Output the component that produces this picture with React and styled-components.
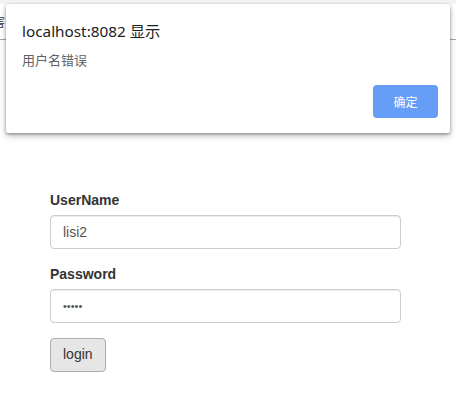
import React from "react";
import styled, { createGlobalStyle } from "styled-components";

const Global = createGlobalStyle`
  html, body { margin: 0; padding: 0; background: #fff; }
  body { font-family: "Liberation Sans", Arial, sans-serif; font-size: 14px; line-height: 1.42857; color: #333; }
  * { box-sizing: border-box; }
`;

const Page = styled.div`
  position: relative;
  width: 456px;
  height: 395px;
  overflow: hidden;
`;

const TopStrip = styled.div`
  height: 4px;
  background: #f1f3f4;
`;

const Header = styled.div`
  height: 36px;
  border-bottom: 1px solid #a8a8a8;
  display: flex;
  align-items: flex-start;
  padding-top: 10px;
  overflow: hidden;
`;

const HeaderText = styled.span`
  margin-left: -7px;
  font-family: "Noto Sans CJK SC", sans-serif;
  font-size: 12px;
  line-height: 16px;
  color: #333;
`;

const Form = styled.form`
  padding: 150px 0 0 50px;
  width: 401px;
  display: flex;
  flex-direction: column;
`;

const Group = styled.div`
  display: flex;
  flex-direction: column;
  margin-bottom: 15px;
`;

const Label = styled.label`
  font-weight: bold;
  font-size: 14px;
  line-height: 20px;
  margin-bottom: 5px;
  color: #333;
`;

const Input = styled.input`
  height: 34px;
  width: 351px;
  padding: 6px 12px;
  font-family: "Liberation Sans", Arial, sans-serif;
  font-size: ${p => (p.type === "password" ? "11px" : "14px")};
  line-height: 1.42857;
  color: #555;
  background: #fff;
  border: 1px solid #ccc;
  border-radius: 4px;
  box-shadow: inset 0 1px 1px rgba(0,0,0,.075);
  outline: none;
`;

const LoginButton = styled.button`
  align-self: flex-start;
  height: 34px;
  padding: 6px 12px;
  font-family: "Liberation Sans", Arial, sans-serif;
  font-size: 14px;
  line-height: 1.42857;
  color: #333;
  background: #e6e6e6;
  border: 1px solid #adadad;
  border-radius: 4px;
  cursor: pointer;
`;

const Dialog = styled.div`
  position: absolute;
  left: 6px;
  top: 4px;
  width: 444px;
  height: 129px;
  background: #fff;
  border-radius: 2px;
  box-shadow: 0 1px 3px rgba(0,0,0,.35), 0 3px 6px rgba(0,0,0,.25);
  padding: 16px 12px 15px 16px;
  display: flex;
  flex-direction: column;
  font-family: "Noto Sans", "Noto Sans CJK SC", sans-serif;
`;

const Title = styled.div`
  font-family: "Noto Sans", "Noto Sans CJK SC", sans-serif;
  font-size: 15.3px;
  line-height: 22px;
  color: #202124;
`;

const Message = styled.div`
  margin-top: 9px;
  font-family: "Noto Sans CJK SC", sans-serif;
  font-size: 13px;
  line-height: 18px;
  color: #5f6368;
`;

const Actions = styled.div`
  margin-top: auto;
  display: flex;
  justify-content: flex-end;
`;

const OkButton = styled.button`
  width: 65px;
  height: 33px;
  border: none;
  border-radius: 4px;
  background: #669df6;
  color: #fff;
  font-family: "Noto Sans CJK SC", sans-serif;
  font-size: 12px;
  padding: 0;
  cursor: pointer;
`;

export default function App() {
  return (
    <>
      <Global />
      <Page>
        <TopStrip />
        <Header>
          <HeaderText>害</HeaderText>
        </Header>
        <Form onSubmit={e => e.preventDefault()}>
          <Group>
            <Label>UserName</Label>
            <Input type="text" defaultValue="lisi2" />
          </Group>
          <Group>
            <Label>Password</Label>
            <Input type="password" defaultValue="12345" />
          </Group>
          <LoginButton type="submit">login</LoginButton>
        </Form>
        <Dialog>
          <Title>localhost:8082 显示</Title>
          <Message>用户名错误</Message>
          <Actions>
            <OkButton>确定</OkButton>
          </Actions>
        </Dialog>
      </Page>
    </>
  );
}
